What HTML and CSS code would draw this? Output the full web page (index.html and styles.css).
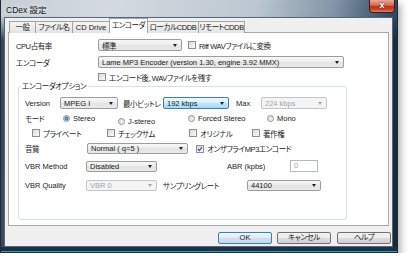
FILE: index.html
```html
<!DOCTYPE html>
<html lang="ja">
<head>
  <meta charset="UTF-8">
  <title>CDex 設定</title>
  <link rel="stylesheet" href="styles.css">
</head>
<body>
  <div class="window">
    <div class="titlebar">
      <span class="title">CDex 設定</span>
      <span class="close">x</span>
    </div>

    <div class="client">
      <div class="tabs">
        <span class="tab ja t-general">一般</span>
        <span class="tab ja t-file">ファイル名</span>
        <span class="tab t-drive">CD Drive</span>
        <span class="tab ja t-enc active">エンコーダ</span>
        <span class="tab ja t-local">ローカルCDDB</span>
        <span class="tab ja t-remote">リモートCDDB</span>
      </div>

      <div class="panel">
        <div class="row">
          <span class="lbl ja lbl-main">CPU占有率</span>
          <div class="combo cpu"><span class="ja">標準</span><i></i></div>
          <label class="chk ja riff"><i class="cb"></i>Riff WAVファイルに変換</label>
        </div>
        <div class="row row-enc">
          <span class="lbl ja lbl-main">エンコーダ</span>
          <div class="combo encoder"><span>Lame MP3 Encoder (version 1.30, engine 3.92 MMX)</span><i></i></div>
        </div>
        <div class="row row-keep">
          <label class="chk ja"><i class="cb"></i>エンコード後、WAVファイルを残す</label>
        </div>

        <fieldset>
          <legend class="ja">エンコーダオプション</legend>

          <div class="row">
            <span class="lbl lbl-version">Version</span>
            <div class="combo version"><span>MPEG I</span><i></i></div>
            <span class="lbl ja lbl-min">最小ビットレ</span>
            <div class="combo rate focus"><span>192 kbps</span><i></i></div>
            <span class="lbl lbl-max">Max</span>
            <div class="combo rate disabled"><span>224 kbps</span><i></i></div>
          </div>

          <div class="row row-mode">
            <span class="lbl ja lbl-mode">モード</span>
            <label class="opt o-stereo"><i class="rb on"></i>Stereo</label>
            <label class="opt o-joint"><i class="rb"></i>J-stereo</label>
            <label class="opt o-forced"><i class="rb"></i>Forced Stereo</label>
            <label class="opt"><i class="rb"></i>Mono</label>
          </div>

          <div class="row row-flags">
            <label class="chk ja f-private"><i class="cb"></i>プライベート</label>
            <label class="chk ja f-crc"><i class="cb"></i>チェックサム</label>
            <label class="chk ja f-orig"><i class="cb"></i>オリジナル</label>
            <label class="chk ja"><i class="cb"></i>著作権</label>
          </div>

          <div class="row row-quality">
            <span class="lbl ja lbl-opt">音質</span>
            <div class="combo quality"><span>Normal ( q=5 )</span><i></i></div>
            <label class="chk ja otf"><i class="cb on"></i>オンザフライMP3エンコード</label>
          </div>

          <div class="row row-method">
            <span class="lbl lbl-opt">VBR Method</span>
            <div class="combo small"><span>Disabled</span><i></i></div>
            <span class="lbl lbl-abr">ABR (kpbs)</span>
            <span class="edit">0</span>
          </div>

          <div class="row row-vbrq">
            <span class="lbl lbl-opt">VBR Quality</span>
            <div class="combo small disabled"><span>VBR 0</span><i></i></div>
            <span class="lbl ja lbl-rate">サンプリングレート</span>
            <div class="combo samplerate"><span>44100</span><i></i></div>
          </div>
        </fieldset>
      </div>

      <div class="buttons">
        <span class="btn default">OK</span>
        <span class="btn ja">キャンセル</span>
        <span class="btn ja help">ヘルプ</span>
      </div>
    </div>
  </div>
</body>
</html>
```

FILE: styles.css
```css
* {
  box-sizing: border-box;
}

body {
  margin: 0;
  background: #fff;
  font-family: "Liberation Sans", "Noto Sans CJK JP", sans-serif;
  font-size: 7.5px;
  color: #1b1b1b;
  font-feature-settings: "palt";
}

/* japanese labels run narrower in the original UI font */
.ja {
  letter-spacing: -0.4px;
}

.window {
  width: 398px;
  height: 253px;
  padding: 0 4px 5px 3px;
  display: flex;
  flex-direction: column;
  border: 1px solid #1c2b3b;
  border-top: 0;
  background:
    linear-gradient(to top, #2d9fc6 0, #2d9fc6 1px, #1f3043 1px, #1f3043 5px, transparent 5px),
    linear-gradient(to bottom, transparent 0, transparent 16px, rgba(22, 38, 56, 0.8) 40px),
    linear-gradient(100deg, #c6ced6 0%, #d4dae0 25%, #bcc7d1 58%, #8294a6 76%, #354a62 89%, #1d2f46 100%);
  box-shadow: 3px 4px 7px rgba(0, 0, 0, 0.3);
}

.titlebar {
  height: 17px;
  display: flex;
  justify-content: space-between;
  align-items: flex-start;
}

.title {
  font-size: 8.5px;
  padding: 3px 0 0 2px;
  color: #111;
  text-shadow: 0 0 4px #fff;
}

.close {
  width: 26px;
  height: 13px;
  margin-right: -2px;
  border: 1px solid #4a1a12;
  border-top: 0;
  border-radius: 0 0 4px 4px;
  background: linear-gradient(#e8a997, #d4694f 45%, #bb3116 52%, #c8472c 80%, #dc8a6c);
  color: #fff;
  font-weight: bold;
  font-size: 9px;
  line-height: 11px;
  text-align: center;
  text-shadow: 0 0 2px #3a0a00;
}

.client {
  flex: 1;
  display: flex;
  flex-direction: column;
  background: #f0f0f0;
  border: 1px solid #56697c;
}

/* tabs */
.tabs {
  position: relative;
  z-index: 1;
  height: 15px;
  margin: 0 0 -1px 4px;
  display: flex;
  align-items: flex-end;
}

.tab {
  height: 12px;
  margin-right: -1px;
  border: 1px solid #a3a3a3;
  border-bottom: 0;
  background: linear-gradient(#f4f4f4, #e4e4e4);
  line-height: 11px;
  text-align: center;
  white-space: nowrap;
  overflow: hidden;
}

.tab.active {
  height: 15px;
  background: #fff;
  line-height: 13px;
}

.t-general { width: 27px; }
.t-file { width: 38px; }
.t-drive { width: 38px; }
.t-enc { width: 39px; }
.t-local { width: 52px; }
.t-remote { width: 47px; }

.panel {
  width: 381px;
  height: 194px;
  margin-left: 3px;
  padding: 6px 0 0 7px;
  background: #fff;
  border: 1px solid #a9a9a9;
}

.row {
  display: flex;
  align-items: center;
  height: 12px;
  white-space: nowrap;
}

.row-enc { margin-top: 5px; }
.row-keep { margin-top: 4px; height: 10px; padding-left: 82px; }

.lbl-main { width: 82px; }

/* combo boxes */
.combo {
  display: flex;
  align-items: center;
  height: 12px;
  padding-left: 3px;
  border: 1px solid #9d9d9d;
  border-radius: 2px;
  background: linear-gradient(#f8f8f8, #ececec 50%, #e3e3e3 50%, #e9e9e9);
}

.combo span {
  flex: 1;
  overflow: hidden;
}

.combo i {
  width: 0;
  height: 0;
  margin: 0 4px 0 2px;
  border-left: 2.5px solid transparent;
  border-right: 2.5px solid transparent;
  border-top: 3px solid #222;
}

.combo.focus {
  border-color: #3c7fb1;
  background: linear-gradient(#eaf6fd, #d9f0fc 50%, #bee6fd 50%, #a7d9f5);
}

.combo.disabled {
  color: #a6a6a6;
  border-color: #c3c6c9;
  background: #f4f4f4;
}

.combo.disabled i {
  border-top-color: #a6a6a6;
}

.cpu { width: 84px; }
.encoder { width: 246px; }
.version { width: 58px; }
.rate { width: 66px; }
.quality { width: 101px; height: 11px; }
.small { width: 71px; height: 11px; }
.samplerate { width: 74px; height: 11px; }

/* check boxes and radios */
.chk,
.opt {
  display: flex;
  align-items: center;
}

.cb {
  width: 8px;
  height: 8px;
  margin-right: 3px;
  border: 1px solid #8f8f8f;
  background: linear-gradient(135deg, #d9d9d9, #fbfbfb);
}

.cb.on {
  background:
    url("data:image/svg+xml,%3Csvg xmlns='http://www.w3.org/2000/svg' viewBox='0 0 6 6'%3E%3Cpath d='M1 3l1.4 1.6L5 1' fill='none' stroke='%233a4f96' stroke-width='1.2'/%3E%3C/svg%3E") center / 6px 6px no-repeat,
    linear-gradient(135deg, #d9d9d9, #fbfbfb);
}

.rb {
  width: 7px;
  height: 7px;
  margin-right: 3px;
  border: 1px solid #8f8f8f;
  border-radius: 50%;
  background: linear-gradient(135deg, #d6d6d6, #fafafa);
}

.rb.on {
  background: radial-gradient(circle, #8fc3ea 0, #2f6fae 1.6px, #e6edf4 2.4px);
}

.riff { margin-left: 6px; }

/* group box */
fieldset {
  width: 329px;
  height: 138px;
  margin: 0 0 0 2px;
  padding: 6px 0 0 6px;
  min-width: 0;
  border: 1px solid #d5dfe5;
  border-radius: 3px;
}

legend {
  margin-left: -4px;
  padding: 0 1px;
  line-height: 9px;
}

.lbl-version { width: 35px; }
.lbl-min { width: 40px; margin-left: 5px; }
.lbl-max { width: 25px; margin-left: 7px; }

.row-mode { margin-top: 4px; height: 10px; }
.lbl-mode { width: 38px; }
.o-stereo { width: 55px; }
.o-joint { width: 70px; margin-top: 6px; }
.o-forced { width: 79px; }

.row-flags { margin-top: 5px; height: 10px; padding-left: 7px; }
.f-private { width: 75px; }
.f-crc { width: 82px; }
.f-orig { width: 63px; }

.row-quality { margin-top: 5px; height: 11px; }
.lbl-opt { width: 61px; }
.quality { margin-left: 1px; }
.otf { margin-left: 8px; }

.row-method { margin-top: 6px; }
.lbl-abr { width: 63px; margin-left: 70px; }

.edit {
  width: 28px;
  height: 12px;
  padding-left: 3px;
  border: 1px solid #b5b9bd;
  color: #a6a6a6;
  line-height: 10px;
}

.row-vbrq { margin-top: 7px; }
.lbl-rate { width: 84px; margin-left: 6px; }

/* dialog buttons */
.buttons {
  display: flex;
  justify-content: flex-end;
  gap: 5px;
  margin-top: 6px;
  padding-right: 1px;
}

.btn {
  width: 54px;
  height: 12px;
  border: 1px solid #707070;
  border-radius: 2px;
  background: linear-gradient(#f2f2f2, #ebebeb 50%, #dddddd 50%, #cfcfcf);
  line-height: 10px;
  text-align: center;
}

.btn.default {
  border-color: #3c7fb1;
  background: linear-gradient(#eef6fb, #dde9f3 50%, #cfe0ee 50%, #c4d9ea);
}

.btn.help { margin-left: 1px; }
```
